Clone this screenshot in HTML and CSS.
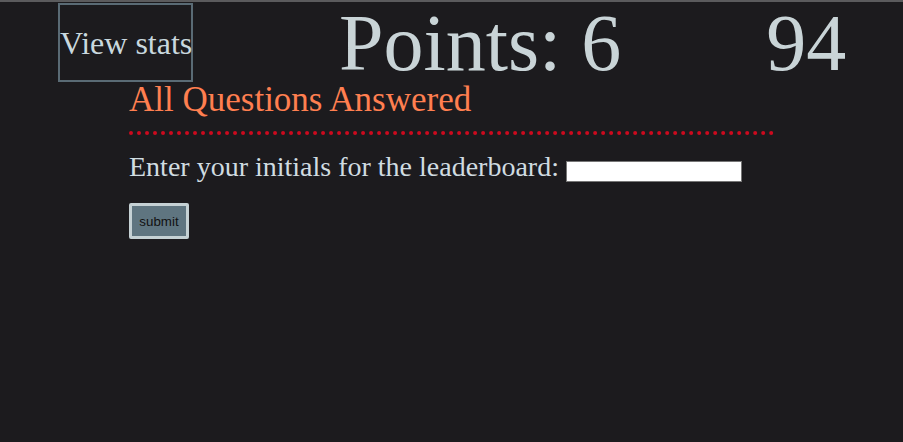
FILE: index.html
```html
<!DOCTYPE html>
<html lang="en">
<head>
<meta charset="utf-8">
<title>Quiz</title>
<link rel="stylesheet" href="styles.css">
</head>
<body>
<header class="header">
  <button class="stats-btn" type="button">View stats</button>
  <span class="points">Points: 6</span>
  <span class="timer">94</span>
</header>
<main class="main">
  <h2 class="done-title">All Questions Answered</h2>
  <p class="initials-row">Enter your initials for the leaderboard: <input class="initials-input" type="text"></p>
  <div class="submit-row"><button class="submit-btn" type="button">submit</button></div>
</main>
</body>
</html>
```
FILE: styles.css
```css
html, body {
  margin: 0;
  padding: 0;
}
body {
  background: #1c1b1e;
  border-top: 2px solid #5b5b5d;
  font-family: "Liberation Serif", "Times New Roman", serif;
  color: #c9d6da;
  height: 440px;
  overflow: hidden;
}
.header {
  display: flex;
  align-items: flex-start;
  height: 80px;
}
.stats-btn {
  margin: 1px 0 0 58px;
  width: 135px;
  height: 79px;
  box-sizing: border-box;
  padding: 2px 0 0;
  border: 2px solid #5a6b75;
  background: transparent;
  color: #c9d8de;
  font-family: "Liberation Serif", "Times New Roman", serif;
  font-size: 32px;
  white-space: nowrap;
}
.points, .timer {
  font-size: 80px;
  line-height: 82px;
  color: #c9d4d7;
}
.points {
  margin-left: 146px;
}
.timer {
  margin-left: 145px;
}
.main {
  width: 645px;
  margin: 0 auto;
}
.done-title {
  margin: 0;
  font-weight: normal;
  font-size: 35px;
  line-height: 36px;
  color: #ff7f50;
  padding-bottom: 13px;
  border-bottom: 4px dotted #cc0a1e;
}
.initials-row {
  margin: 16px 0 0;
  font-size: 28px;
  color: #d0dce1;
}
.initials-input {
  margin: 0;
  width: 176px;
  height: 21px;
  box-sizing: border-box;
  border: 1px solid #767676;
  background: #fff;
  padding: 0 2px;
}
.submit-row {
  margin-top: 20px;
}
.submit-btn {
  width: 60px;
  height: 36px;
  box-sizing: border-box;
  padding: 0;
  border: 3px solid #c5d1d4;
  border-radius: 2px;
  background: #5f7580;
  color: #111;
  font-family: "Liberation Sans", Arial, sans-serif;
  font-size: 13.33px;
}
```
